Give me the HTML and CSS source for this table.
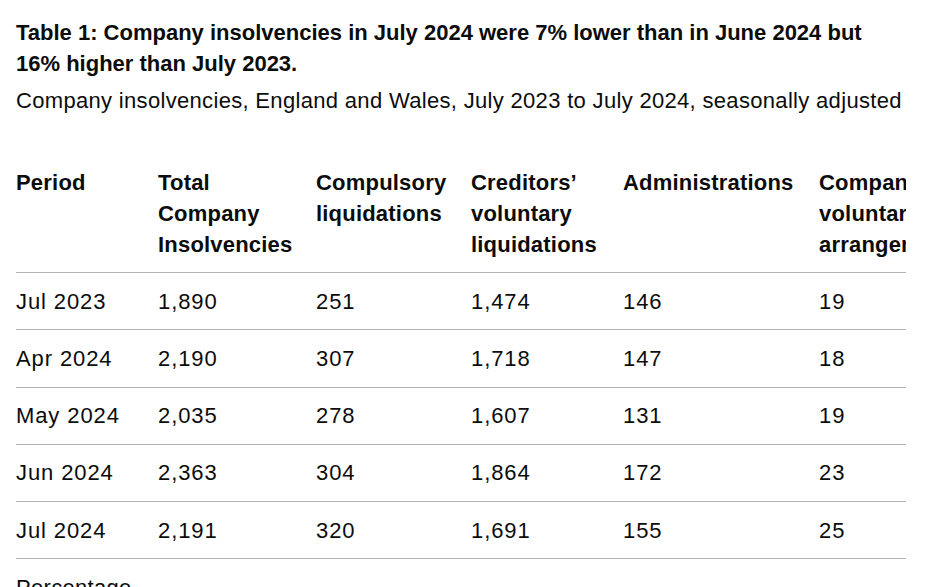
FILE: index.html
```html
<!DOCTYPE html>
<html lang="en">
<head>
<meta charset="utf-8">
<title>Company insolvencies</title>
<link rel="stylesheet" href="styles.css">
</head>
<body>
<main class="page">
  <h2 class="title">Table 1: Company insolvencies in July 2024 were 7% lower than in June 2024 but 16% higher than July 2023.</h2>
  <p class="caption">Company insolvencies, England and Wales, July 2023 to July 2024, seasonally adjusted</p>
  <div class="table-wrap">
    <table class="data">
      <thead>
        <tr>
          <th class="c1">Period</th>
          <th class="c2">Total Company Insolvencies</th>
          <th class="c3">Compulsory liquidations</th>
          <th class="c4">Creditors’ voluntary liquidations</th>
          <th class="c5">Administrations</th>
          <th class="c6">Company voluntary arrangements</th>
          <th class="c7">Receivership appointments</th>
        </tr>
      </thead>
      <tbody>
        <tr><td>Jul 2023</td><td>1,890</td><td>251</td><td>1,474</td><td>146</td><td>19</td><td>0</td></tr>
        <tr><td>Apr 2024</td><td>2,190</td><td>307</td><td>1,718</td><td>147</td><td>18</td><td>0</td></tr>
        <tr><td>May 2024</td><td>2,035</td><td>278</td><td>1,607</td><td>131</td><td>19</td><td>0</td></tr>
        <tr><td>Jun 2024</td><td>2,363</td><td>304</td><td>1,864</td><td>172</td><td>23</td><td>0</td></tr>
        <tr><td>Jul 2024</td><td>2,191</td><td>320</td><td>1,691</td><td>155</td><td>25</td><td>0</td></tr>
        <tr class="change"><td>Percentage change Jun 2024 to Jul 2024</td><td>-7%</td><td>5%</td><td>-9%</td><td>-10%</td><td>9%</td><td>-</td></tr>
      </tbody>
    </table>
  </div>
</main>
</body>
</html>
```

FILE: styles.css
```css
html, body {
  margin: 0;
  padding: 0;
  background: #ffffff;
}

body {
  font-family: "Liberation Sans", Arial, sans-serif;
  color: #0b0c0c;
}

.page {
  padding: 17px 0 0 16px;
}

.title {
  margin: 0;
  font-size: 22px;
  line-height: 31px;
  font-weight: 700;
  max-width: 880px;
}

.caption {
  margin: 6px 0 0;
  font-size: 22px;
  line-height: 31px;
  font-weight: 400;
  letter-spacing: 0.32px;
}

.table-wrap {
  margin-top: 38px;
  width: 890px;
  overflow: hidden;
}

.data {
  border-collapse: collapse;
  border-spacing: 0;
  table-layout: fixed;
  width: 1150px;
  font-size: 22px;
  line-height: 31px;
}

.data th,
.data td {
  text-align: left;
  vertical-align: top;
  padding: 12.6px 25px 12.6px 0;
  border-bottom: 1px solid #b1b4b6;
}

.data th {
  font-weight: 700;
  letter-spacing: 0.2px;
}

.data td {
  font-weight: 400;
  letter-spacing: 0.9px;
}

.data .change td {
  vertical-align: middle;
}

.data .change td:first-child {
  vertical-align: top;
  letter-spacing: 0.3px;
}

.c1 { width: 117px; }
.c2 { width: 133px; }
.c3 { width: 130px; }
.c4 { width: 127px; }
.c5 { width: 171px; }
.c6 { width: 150px; }
.c7 { width: 170px; }
```
